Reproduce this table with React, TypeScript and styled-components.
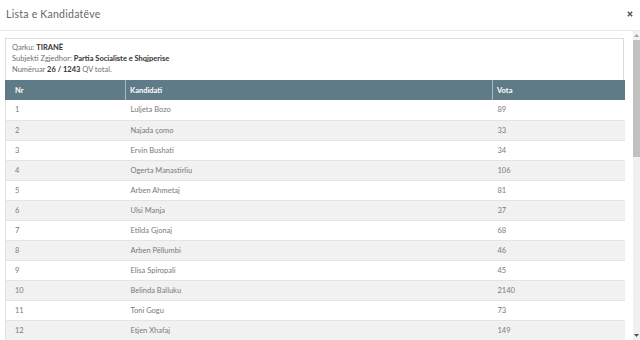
import React from "react";
import styled, { createGlobalStyle } from "styled-components";

const GlobalStyle = createGlobalStyle`
  html, body {
    margin: 0;
    padding: 0;
    background: #fff;
    font-family: Lato, "Open Sans", "Liberation Sans", sans-serif;
  }
  * {
    box-sizing: border-box;
  }
`;

const candidates: [string, number][] = [
  ["Luljeta Bozo", 89],
  ["Najada çomo", 33],
  ["Ervin Bushati", 34],
  ["Ogerta Manastirliu", 106],
  ["Arben Ahmetaj", 81],
  ["Ulsi Manja", 37],
  ["Etilda Gjonaj", 68],
  ["Arben Pëllumbi", 46],
  ["Elisa Spiropali", 45],
  ["Belinda Balluku", 2140],
  ["Toni Gogu", 73],
  ["Etjen Xhafaj", 149],
  ["Edi Rama", 1820],
  ["Taulant Balla", 212],
  ["Erion Braçe", 97],
  ["Mimi Kodheli", 64],
  ["Fatmir Xhafaj", 58],
  ["Anila Denaj", 42],
  ["Blendi Klosi", 39],
  ["Vasilika Hysi", 51],
  ["Gent Strazimiri", 27],
  ["Xhemal Qefalia", 31],
  ["Lindita Nikolla", 44],
  ["Klodiana Spahiu", 36],
  ["Olta Xhaçka", 55],
  ["Ermal Pacaj", 22],
  ["Mirela Kumbaro", 29],
  ["Pandeli Majko", 63],
  ["Eglantina Gjermeni", 41],
  ["Damian Gjiknuri", 38],
  ["Bora Muzhaqi", 19],
  ["Anastas Angjeli", 26],
  ["Klajda Gjosha", 24],
  ["Artan Lame", 17],
];

const Modal = styled.div`
  width: 640px;
  height: 340px;
  display: flex;
  flex-direction: column;
  background: #fff;
  overflow: hidden;
`;

const Header = styled.div`
  height: 31px;
  flex: none;
  display: flex;
  align-items: center;
  justify-content: space-between;
  padding: 0 7px 2px 6px;
  border-bottom: 1px solid #e9ecee;
`;

const Title = styled.h4`
  margin: 0;
  font-size: 10.5px;
  font-weight: 400;
  color: #666;
  letter-spacing: 0.25px;
`;

const CloseButton = styled.button`
  border: none;
  background: none;
  padding: 0;
  display: flex;
  cursor: pointer;
`;

const Body = styled.div`
  flex: 1;
  min-height: 0;
  display: flex;
`;

const ScrollArea = styled.div`
  flex: 1;
  overflow: hidden;
  padding: 7px 9px 10px 5px;
`;

/* the page's scrollbars are hidden in the screenshot browser, so the bar is drawn */
const ScrollBar = styled.div`
  width: 7px;
  flex: none;
  display: flex;
  flex-direction: column;
  background: #f1f1f1;
`;

const ScrollButton = styled.div`
  height: 9px;
  flex: none;
  display: flex;
  align-items: center;
  justify-content: center;
`;

const ScrollTrack = styled.div`
  flex: 1;
  display: flex;
  flex-direction: column;
`;

const ScrollThumb = styled.div`
  height: 117px;
  background: #c1c1c1;
`;

const InfoBox = styled.div`
  border: 1px solid #dcdcdc;
  border-bottom: none;
  padding: 3px 6px 5px;
  font-size: 7.5px;
  line-height: 11px;
  color: #707070;
`;

const InfoLine = styled.div`
  & b {
    color: #333;
    font-weight: 700;
  }
`;

const Table = styled.table`
  width: 100%;
  border-collapse: collapse;
  table-layout: fixed;
  font-size: 7.5px;
`;

const HeadCell = styled.th<{ $first?: boolean; $w: number }>`
  width: ${({ $w }) => $w}px;
  height: 20px;
  background: #5f7b88;
  color: #fff;
  font-weight: 700;
  text-align: left;
  padding: 0 0 0 ${({ $first }) => ($first ? 9 : 4)}px;
  border-left: 1px solid ${({ $first }) => ($first ? "#5f7b88" : "#a9bac2")};
`;

const Row = styled.tr<{ $striped: boolean }>`
  background: ${({ $striped }) => ($striped ? "#f1f1f1" : "#fff")};
  border-bottom: 1px solid #e4e4e4;
`;

const Cell = styled.td<{ $first?: boolean }>`
  height: 20px;
  padding: 0 0 0 ${({ $first }) => ($first ? 9 : 5)}px;
  color: #7a7a7a;
  border-left: ${({ $first }) => ($first ? "1px solid #e2e2e2" : "none")};
`;

export default function App() {
  return (
    <>
      <GlobalStyle />
      <Modal>
        <Header>
          <Title>Lista e Kandidatëve</Title>
          <CloseButton aria-label="Mbyll">
            <svg width="6" height="6" viewBox="0 0 6 6">
              <path d="M0.8 0.8 L5.2 5.2 M5.2 0.8 L0.8 5.2" stroke="#5a5a5a" strokeWidth="1.5" />
            </svg>
          </CloseButton>
        </Header>
        <Body>
          <ScrollArea>
            <InfoBox>
              <InfoLine>
                Qarku: <b>TIRANË</b>
              </InfoLine>
              <InfoLine>
                Subjekti Zgjedhor: <b>Partia Socialiste e Shqjperise</b>
              </InfoLine>
              <InfoLine>
                Numëruar <b>26 / 1243</b> QV total.
              </InfoLine>
            </InfoBox>
            <Table>
              <thead>
                <tr>
                  <HeadCell $first $w={120}>Nr</HeadCell>
                  <HeadCell $w={367}>Kandidati</HeadCell>
                  <HeadCell $w={132}>Vota</HeadCell>
                </tr>
              </thead>
              <tbody>
                {candidates.slice(0, 12).map(([name, votes], i) => (
                  <Row key={name} $striped={i % 2 === 1}>
                    <Cell $first>{i + 1}</Cell>
                    <Cell>{name}</Cell>
                    <Cell>{votes}</Cell>
                  </Row>
                ))}
              </tbody>
            </Table>
          </ScrollArea>
          <ScrollBar>
            <ScrollButton>
              <svg width="5" height="3" viewBox="0 0 5 3">
                <polygon points="2.5,0 5,3 0,3" fill="#a3a3a3" />
              </svg>
            </ScrollButton>
            <ScrollTrack>
              <ScrollThumb />
            </ScrollTrack>
            <ScrollButton>
              <svg width="5" height="3" viewBox="0 0 5 3">
                <polygon points="0,0 5,0 2.5,3" fill="#505050" />
              </svg>
            </ScrollButton>
          </ScrollBar>
        </Body>
      </Modal>
    </>
  );
}
